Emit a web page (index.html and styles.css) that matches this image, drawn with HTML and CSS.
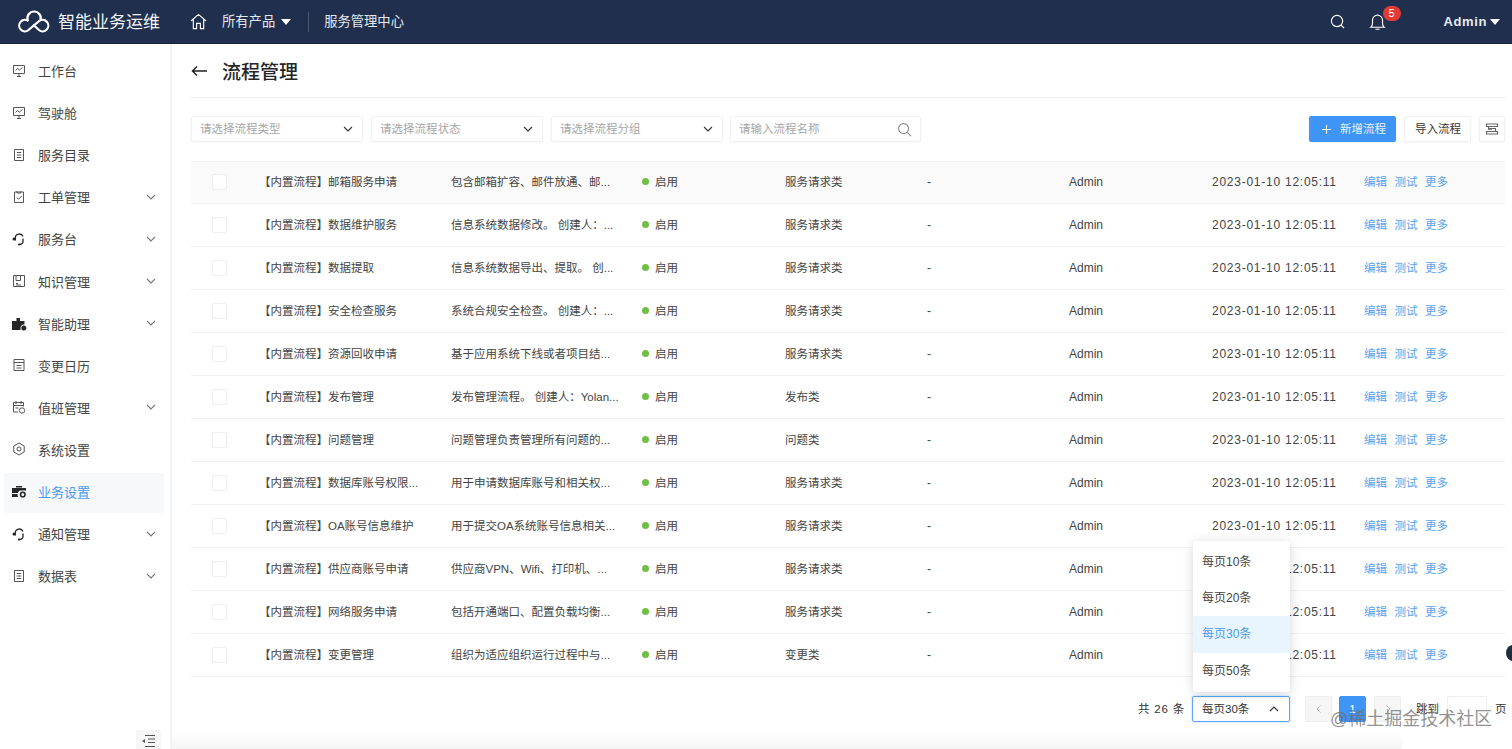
FILE: index.html
```html
<!DOCTYPE html>
<html lang="zh">
<head>
<meta charset="utf-8">
<title>流程管理</title>
<link rel="stylesheet" href="styles.css">
</head>
<body>
<svg width="0" height="0" class="defs">
  <defs>
    <symbol id="i-chev" viewBox="0 0 12 12"><path d="M2 4l4 4 4-4" fill="none" stroke="currentColor" stroke-width="1.1"/></symbol>
    <symbol id="i-screen" viewBox="0 0 14 14"><path d="M1.500 1.500h11v8h-11zM5 12.500h4M7 9.500v3M3.500 6.500l2-2 2 1.500 3-2.500" fill="none" stroke="currentColor" stroke-width="1"/></symbol>
    <symbol id="i-doc" viewBox="0 0 14 14"><path d="M2.500 1.500h9v11h-9zM4.800 4.500h4.400M4.800 7h4.400M4.800 9.500h4.400" fill="none" stroke="currentColor" stroke-width="1"/></symbol>
    <symbol id="i-head" viewBox="0 0 14 14"><path d="M3.300 8.500V6a4 4 0 0 1 7.700-1.500M11 6.500v3c0 1.800-1.400 2.800-3.500 3" fill="none" stroke="#262626" stroke-width="1.300"/><circle cx="2" cy="7" r="1.500" fill="#262626"/><circle cx="7" cy="12.500" r="1.100" fill="#262626"/></symbol>
  </defs>
</svg>
<header class="topbar">
  <div class="brand">
    <svg class="logo" viewBox="0 0 32 24"><path d="M10.500 11.200A5.700 5.700 0 1 0 10.500 20L21 11.200A5.700 5.700 0 1 1 21 20L15 14.500M9.700 10.200A6.700 6.700 0 1 1 22.500 10.200" fill="none" stroke="#fff" stroke-width="2.200"/></svg>
    <span class="brand-name">智能业务运维</span>
  </div>
  <svg class="home" viewBox="0 0 18 18"><path d="M1 8.500L9 1.500l8 7M3.500 7v9.500h3.500V11h4v5.500h3.500V7" fill="none" stroke="#fff" stroke-width="1.200"/></svg>
  <span class="nav-item">所有产品</span>
  <span class="caret caret-products"></span>
  <span class="nav-sep"></span>
  <span class="nav-item">服务管理中心</span>
  <div class="top-right">
    <svg class="top-search" viewBox="0 0 16 16"><circle cx="7.500" cy="7.500" r="6" fill="none" stroke="#fff" stroke-width="1.200"/><path d="M12 12l3 3" stroke="#fff" stroke-width="1.200"/></svg>
    <div class="bell-wrap">
      <svg class="bell" viewBox="0 0 18 18"><path d="M2 14.500c1.500-1 1.700-2 1.700-4.500V7a5.300 5.300 0 0 1 10.600 0v3c0 2.500.2 3.500 1.700 4.500zM6.800 16.700h4.400" fill="none" stroke="#fff" stroke-width="1.200"/></svg>
      <span class="badge">5</span>
    </div>
    <span class="admin">Admin</span>
    <span class="caret"></span>
  </div>
</header>
<div class="layout">
  <aside class="sidebar">
    <nav class="menu">
      <a class="menu-item"><svg class="mi"><use href="#i-screen"/></svg><span>工作台</span></a>
      <a class="menu-item"><svg class="mi"><use href="#i-screen"/></svg><span>驾驶舱</span></a>
      <a class="menu-item"><svg class="mi"><use href="#i-doc"/></svg><span>服务目录</span></a>
      <a class="menu-item"><svg class="mi" viewBox="0 0 14 14"><path d="M2.500 2h9v10.500h-9zM5 1v2h4V1M4.800 7.500l1.700 1.700 3-3" fill="none" stroke="currentColor"/></svg><span>工单管理</span><svg class="chev"><use href="#i-chev"/></svg></a>
      <a class="menu-item"><svg class="mi"><use href="#i-head"/></svg><span>服务台</span><svg class="chev"><use href="#i-chev"/></svg></a>
      <a class="menu-item"><svg class="mi" viewBox="0 0 14 14"><path d="M1.500 1.500h11v11h-11zM4 1.500v5h4.500v-5M4 9.500h2M4 11h5" fill="none" stroke="currentColor"/></svg><span>知识管理</span><svg class="chev"><use href="#i-chev"/></svg></a>
      <a class="menu-item"><svg class="mi mi-wide" viewBox="0 0 16 14"><path d="M1 4.500h4.500V1.500H9v3h4.500V8a3.500 3.500 0 0 0-4 4v1.500H1z" fill="#262626"/><circle cx="12.800" cy="11.500" r="2.500" fill="#262626"/></svg><span>智能助理</span><svg class="chev"><use href="#i-chev"/></svg></a>
      <a class="menu-item"><svg class="mi" viewBox="0 0 14 14"><path d="M2 1.500h10v11H2zM2 4.500h10M4.500 7.500h5M4.500 10h5" fill="none" stroke="currentColor"/></svg><span>变更日历</span></a>
      <a class="menu-item"><svg class="mi" viewBox="0 0 14 14"><path d="M6 12H1.500V2.500h10v4M4 1v3M9 1v3M1.500 5.500h10M3.500 8h3" fill="none" stroke="currentColor"/><circle cx="10" cy="10.500" r="2.700" fill="none" stroke="currentColor"/></svg><span>值班管理</span><svg class="chev"><use href="#i-chev"/></svg></a>
      <a class="menu-item"><svg class="mi" viewBox="0 0 14 14"><path d="M7 1l5.200 3v6L7 13l-5.200-3V4z" fill="none" stroke="currentColor" stroke-linejoin="round"/><circle cx="7" cy="7" r="2" fill="none" stroke="currentColor"/></svg><span>系统设置</span></a>
      <a class="menu-item active"><svg class="mi mi-wide" viewBox="0 0 16 14"><path d="M1 3.500h14v2.500H9.500a3.500 3.500 0 0 0-2.600 2.500H1zM1 9.500h5.600a4 4 0 0 0 .6 3H1zM5 3V1.500h6V3" fill="#262626"/><circle cx="11.800" cy="10" r="2.300" fill="none" stroke="#262626" stroke-width="1.600"/></svg><span>业务设置</span></a>
      <a class="menu-item"><svg class="mi"><use href="#i-head"/></svg><span>通知管理</span><svg class="chev"><use href="#i-chev"/></svg></a>
      <a class="menu-item"><svg class="mi"><use href="#i-doc"/></svg><span>数据表</span><svg class="chev"><use href="#i-chev"/></svg></a>
    </nav>
    <div class="collapse"><svg viewBox="0 0 14 14"><path d="M4 1.500h10M7 5h7M7 8.500h7M4 12.500h10" stroke="#555" stroke-width="1"/><path d="M4 5L1 7l3 2z" fill="#555"/></svg></div>
  </aside>
  <main class="content">
    <div class="title-bar">
      <svg class="back" viewBox="0 0 16 12"><path d="M16 6H1.500M6 1.500L1.500 6 6 10.500" fill="none" stroke="#222" stroke-width="1.500"/></svg>
      <h1>流程管理</h1>
    </div>
    <div class="toolbar">
      <div class="field"><span>请选择流程类型</span><svg class="field-chev"><use href="#i-chev"/></svg></div>
      <div class="field"><span>请选择流程状态</span><svg class="field-chev"><use href="#i-chev"/></svg></div>
      <div class="field"><span>请选择流程分组</span><svg class="field-chev"><use href="#i-chev"/></svg></div>
      <div class="field field-search"><span>请输入流程名称</span><svg class="search-ic" viewBox="0 0 16 16"><circle cx="7" cy="7" r="5.300" fill="none" stroke="#8c8c8c" stroke-width="1.200"/><path d="M11 11l4 4" stroke="#8c8c8c" stroke-width="1.200"/></svg></div>
      <div class="tool-actions">
        <button class="btn btn-primary"><svg viewBox="0 0 12 12"><path d="M6 1v10M1 6h10" stroke="#fff" stroke-width="1.200"/></svg><span>新增流程</span></button>
        <button class="btn"><span>导入流程</span></button>
        <button class="btn btn-icon"><svg viewBox="0 0 14 14"><path d="M1.500 2h11v2.500h-11zM1.500 9.500h11V12h-11zM3.500 4.500v2h7v3M3 7.200h4" fill="none" stroke="#666" stroke-width="1.200"/></svg></button>
      </div>
    </div>
    <div class="table">
      <div class="row row-first"><span class="check"></span><span>【内置流程】邮箱服务申请</span><span>包含邮箱扩容、邮件放通、邮...</span><span class="status">启用</span><span>服务请求类</span><span class="latin">-</span><span class="latin">Admin</span><span class="latin date">2023-01-10 12:05:11</span><span class="ops"><a>编辑</a><a>测试</a><a>更多</a></span></div>
      <div class="row"><span class="check"></span><span>【内置流程】数据维护服务</span><span>信息系统数据修改。 创建人：...</span><span class="status">启用</span><span>服务请求类</span><span class="latin">-</span><span class="latin">Admin</span><span class="latin date">2023-01-10 12:05:11</span><span class="ops"><a>编辑</a><a>测试</a><a>更多</a></span></div>
      <div class="row"><span class="check"></span><span>【内置流程】数据提取</span><span>信息系统数据导出、提取。 创...</span><span class="status">启用</span><span>服务请求类</span><span class="latin">-</span><span class="latin">Admin</span><span class="latin date">2023-01-10 12:05:11</span><span class="ops"><a>编辑</a><a>测试</a><a>更多</a></span></div>
      <div class="row"><span class="check"></span><span>【内置流程】安全检查服务</span><span>系统合规安全检查。 创建人：...</span><span class="status">启用</span><span>服务请求类</span><span class="latin">-</span><span class="latin">Admin</span><span class="latin date">2023-01-10 12:05:11</span><span class="ops"><a>编辑</a><a>测试</a><a>更多</a></span></div>
      <div class="row"><span class="check"></span><span>【内置流程】资源回收申请</span><span>基于应用系统下线或者项目结...</span><span class="status">启用</span><span>服务请求类</span><span class="latin">-</span><span class="latin">Admin</span><span class="latin date">2023-01-10 12:05:11</span><span class="ops"><a>编辑</a><a>测试</a><a>更多</a></span></div>
      <div class="row"><span class="check"></span><span>【内置流程】发布管理</span><span>发布管理流程。 创建人：Yolan...</span><span class="status">启用</span><span>发布类</span><span class="latin">-</span><span class="latin">Admin</span><span class="latin date">2023-01-10 12:05:11</span><span class="ops"><a>编辑</a><a>测试</a><a>更多</a></span></div>
      <div class="row"><span class="check"></span><span>【内置流程】问题管理</span><span>问题管理负责管理所有问题的...</span><span class="status">启用</span><span>问题类</span><span class="latin">-</span><span class="latin">Admin</span><span class="latin date">2023-01-10 12:05:11</span><span class="ops"><a>编辑</a><a>测试</a><a>更多</a></span></div>
      <div class="row"><span class="check"></span><span>【内置流程】数据库账号权限...</span><span>用于申请数据库账号和相关权...</span><span class="status">启用</span><span>服务请求类</span><span class="latin">-</span><span class="latin">Admin</span><span class="latin date">2023-01-10 12:05:11</span><span class="ops"><a>编辑</a><a>测试</a><a>更多</a></span></div>
      <div class="row"><span class="check"></span><span>【内置流程】OA账号信息维护</span><span>用于提交OA系统账号信息相关...</span><span class="status">启用</span><span>服务请求类</span><span class="latin">-</span><span class="latin">Admin</span><span class="latin date">2023-01-10 12:05:11</span><span class="ops"><a>编辑</a><a>测试</a><a>更多</a></span></div>
      <div class="row"><span class="check"></span><span>【内置流程】供应商账号申请</span><span>供应商VPN、Wifi、打印机、...</span><span class="status">启用</span><span>服务请求类</span><span class="latin">-</span><span class="latin">Admin</span><span class="latin date">2023-01-10 12:05:11</span><span class="ops"><a>编辑</a><a>测试</a><a>更多</a></span></div>
      <div class="row"><span class="check"></span><span>【内置流程】网络服务申请</span><span>包括开通端口、配置负载均衡...</span><span class="status">启用</span><span>服务请求类</span><span class="latin">-</span><span class="latin">Admin</span><span class="latin date">2023-01-10 12:05:11</span><span class="ops"><a>编辑</a><a>测试</a><a>更多</a></span></div>
      <div class="row"><span class="check"></span><span>【内置流程】变更管理</span><span>组织为适应组织运行过程中与...</span><span class="status">启用</span><span>变更类</span><span class="latin">-</span><span class="latin">Admin</span><span class="latin date">2023-01-10 12:05:11</span><span class="ops"><a>编辑</a><a>测试</a><a>更多</a></span></div>
    </div>
    <div class="pager">
      <span class="total">共 26 条</span>
      <div class="size-select">
        <span class="size-label">每页30条</span>
        <svg class="size-chev" viewBox="0 0 12 12"><path d="M2 8l4-4 4 4" fill="none" stroke="#333" stroke-width="1.200"/></svg>
        <ul class="dropdown">
          <li>每页10条</li>
          <li>每页20条</li>
          <li class="selected">每页30条</li>
          <li>每页50条</li>
        </ul>
      </div>
      <span class="page-btn page-prev"><svg viewBox="0 0 12 12"><path d="M7.500 2.500L4 6l3.500 3.500" fill="none" stroke="#bbb"/></svg></span>
      <span class="page-btn page-current">1</span>
      <span class="page-btn page-next"><svg viewBox="0 0 12 12"><path d="M4.500 2.500L8 6 4.500 9.500" fill="none" stroke="#bbb"/></svg></span>
      <span class="jump">跳到</span>
      <span class="page-input"></span>
      <span class="page-unit">页</span>
    </div>
  </main>
</div>
<div class="watermark">@稀土掘金技术社区</div>
<div class="bot"></div>
<div class="bottom-fade"></div>
</body>
</html>
```

FILE: styles.css
```css
* { box-sizing: border-box; }
html, body { height: 100%; }
body {
  margin: 0;
  height: 749px;
  overflow: hidden;
  position: relative;
  background: #fff;
  color: #333;
  font-family: "Liberation Sans", "Noto Sans CJK SC", sans-serif;
  font-size: 11.500px;
}
.defs { position: absolute; }

/* top bar */
.topbar {
  height: 44px;
  background: #1f2f4d;
  border-bottom: 1px solid #17243c;
  display: flex;
  align-items: center;
  padding-left: 18px;
  color: #e4e8ee;
  font-size: 13px;
}
.brand { display: flex; align-items: center; width: 172px; }
.logo { width: 32px; height: 24px; margin-right: 8px; }
.brand-name { font-size: 17px; color: #f2f4f7; padding-bottom: 2px; }
.home { width: 17px; height: 17px; }
.nav-item { margin-left: 15px; font-size: 13.300px; padding-bottom: 2px; }
.caret {
  width: 0; height: 0;
  border-left: 5px solid transparent;
  border-right: 5px solid transparent;
  border-top: 6px solid #fff;
}
.caret-products { margin-left: 6px; }
.nav-sep { width: 1px; height: 20px; background: #4a5870; margin-left: 17px; }
.top-right { margin-left: auto; display: flex; align-items: center; padding-right: 12px; }
.top-search { width: 15px; height: 15px; }
.bell-wrap { position: relative; margin-left: 24px; margin-right: 1px; width: 16px; height: 18px; }
.bell { width: 17px; height: 18px; display: block; }
.badge {
  position: absolute;
  left: 14px; top: -7px;
  width: 18px; height: 15px;
  border-radius: 8px;
  background: #e23b36;
  color: #fff;
  font-size: 11px;
  line-height: 15px;
  text-align: center;
}
.admin { margin-left: 58px; margin-right: 3px; font-weight: 700; font-size: 13px; letter-spacing: .6px; color: #e8ebf0; }

/* layout */
.layout { display: flex; height: 705px; }
.sidebar {
  width: 172px;
  flex: none;
  border-right: 2px solid #f2f3f5;
  position: relative;
  padding-top: 6.500px;
  display: flex;
  flex-direction: column;
}
.menu { display: flex; flex-direction: column; }
.menu-item {
  height: 42.100px;
  margin: 0 6px 0 4px;
  padding: 0 7px 2px 8px;
  display: flex;
  align-items: center;
  font-size: 13px;
  color: #444;
}
.menu-item span { margin-left: 12px; }
.menu-item .mi-wide + span { margin-left: 11px; }
.mi { width: 14px; height: 14px; flex: none; color: #555; }
.mi-wide { width: 16px; height: 15px; margin-left: -1px; }
.chev { width: 12px; height: 12px; margin-left: auto; color: #777; }
.active { background: linear-gradient(to bottom, #fff 2px, #f6f8fa 2px, #f6f8fa calc(100% - 1px), #fff calc(100% - 1px)); border-radius: 5px; }
.active span { color: #4c9bf0; }
.collapse {
  margin-top: auto;
  align-self: flex-end;
  margin-right: 9px;
  width: 25px;
  height: 19px;
  background: #f6f6f6;
  padding: 4px 0 0 5px;
  overflow: hidden;
}
.collapse svg { width: 14px; height: 14px; display: block; }

/* content */
.content { flex: 1; min-width: 0; padding: 0 7px 0 19px; }
.title-bar {
  height: 54px;
  border-bottom: 1px solid #eceef0;
  display: flex;
  align-items: center;
}
.back { width: 16px; height: 12px; }
h1 { margin: 0 0 0 15px; font-size: 19px; font-weight: 500; color: #262626; }

.toolbar { display: flex; gap: 8px; margin-top: 18px; }
.field {
  width: 172px;
  height: 26px;
  border: 1px solid #eff0f2;
  border-radius: 2px;
  box-shadow: 0 1px 2px rgba(0,0,0,.03);
  display: flex;
  align-items: center;
  justify-content: space-between;
  padding: 0 8px 0 8px;
  color: #a6a6a6;
}
.field span { padding-bottom: 2px; }
.field-chev { width: 12px; height: 12px; color: #333; }
.field-search { width: 191px; margin-left: -1px; }
.search-ic { width: 15px; height: 15px; }
.tool-actions { margin-left: auto; display: flex; gap: 8px; }
.btn {
  height: 26px;
  width: 67px;
  border: 1px solid #eff0f2;
  border-radius: 2px;
  background: #fff;
  color: #333;
  font: inherit;
  padding: 0 0 0 10px;
  display: flex;
  align-items: center;
  box-shadow: 0 1px 2px rgba(0,0,0,.04);
}
.btn span { padding-bottom: 2px; }
.btn-primary { background: #3f95f5; border-color: #3f95f5; color: #e6f1fd; width: 87px; padding-left: 11px; }
.btn-primary svg { width: 11px; height: 11px; margin-right: 8px; }
.btn-icon { width: 26px; padding: 0 5px; }
.btn-icon svg { width: 14px; height: 14px; }

/* table */
.table { margin-top: 19px; }
.row {
  height: 43px;
  display: grid;
  grid-template-columns: 68px 192px 191px 143px 142px 142px 143px 152px 141px;
  align-items: center;
  border-bottom: 1px solid #f0f1f2;
  color: #444;
  white-space: nowrap;
}
.row-first { background: #fafafa; box-shadow: inset 0 1px #f3f3f3; }
.row > span { padding-bottom: 2px; }
.row > .latin { padding-bottom: 0; font-size: 12px; }
.row > .check {
  width: 15px; height: 16px;
  padding: 0;
  margin-left: 21px;
  background: #fff;
  border: 1px solid #eeeeee;
  border-radius: 2px;
}
.status { display: flex; align-items: center; }
.status::before {
  content: "";
  width: 7px; height: 7px;
  border-radius: 50%;
  background: #6fbf45;
  margin-right: 6px;
}
.date { letter-spacing: .75px; }
.ops { display: flex; gap: 7.500px; color: #5aa2ee; }

/* pager */
.pager {
  display: flex;
  align-items: center;
  justify-content: flex-end;
  margin-top: 19px;
  height: 26px;
  color: #333;
}
.total { letter-spacing: .8px; margin-right: 7px; padding-bottom: 2px; }
.size-label { padding-bottom: 2px; }
.size-select {
  position: relative;
  width: 98px;
  height: 26px;
  border: 1px solid #5da5f2;
  border-radius: 2px;
  box-shadow: 0 0 2px rgba(64,149,245,.5);
  display: flex;
  align-items: center;
  justify-content: space-between;
  padding: 0 9px;
  margin-right: 15px;
}
.size-chev { width: 12px; height: 12px; }
.dropdown {
  position: absolute;
  left: 0;
  bottom: 29px;
  width: 97px;
  margin: 0;
  padding: 3px 0;
  list-style: none;
  background: #fff;
  border-radius: 3px;
  box-shadow: 0 2px 12px rgba(0,0,0,.16);
  font-size: 12px;
}
.dropdown li { height: 36.300px; line-height: 36px; padding-left: 9px; color: #444; }
.dropdown .selected { background: #e9f5fe; color: #4c9bf0; }
.page-btn {
  width: 27px; height: 26px;
  border: 1px solid #ededed;
  border-radius: 2px;
  background: #f6f6f6;
  display: flex;
  align-items: center;
  justify-content: center;
}
.page-btn svg { width: 12px; height: 12px; }
.page-current { background: #3f95f5; border-color: #3f95f5; color: #fff; margin: 0 8px 0 7px; }
.jump { margin: 0 7px 0 15px; width: 24px; white-space: nowrap; padding-bottom: 2px; }
.page-input { width: 40px; height: 26px; border: 1px solid #eeeeee; border-radius: 2px; }
.page-unit { margin-left: 8px; width: 10px; overflow: visible; white-space: nowrap; padding-bottom: 2px; }

/* overlays */
.watermark {
  position: absolute;
  left: 1330px;
  top: 704px;
  font-size: 18px;
  color: rgba(110,110,110,.75);
  white-space: nowrap;
}
.bot {
  position: absolute;
  left: 1506px;
  top: 645px;
  width: 14px;
  height: 16px;
  border-radius: 50%;
  background: #1f2f3d;
}
.bottom-fade {
  position: absolute;
  left: 172px;
  bottom: 0;
  width: 1230px;
  height: 16px;
  background: linear-gradient(to bottom, rgba(240,240,240,0), rgba(240,240,240,.7));
  pointer-events: none;
}
```
